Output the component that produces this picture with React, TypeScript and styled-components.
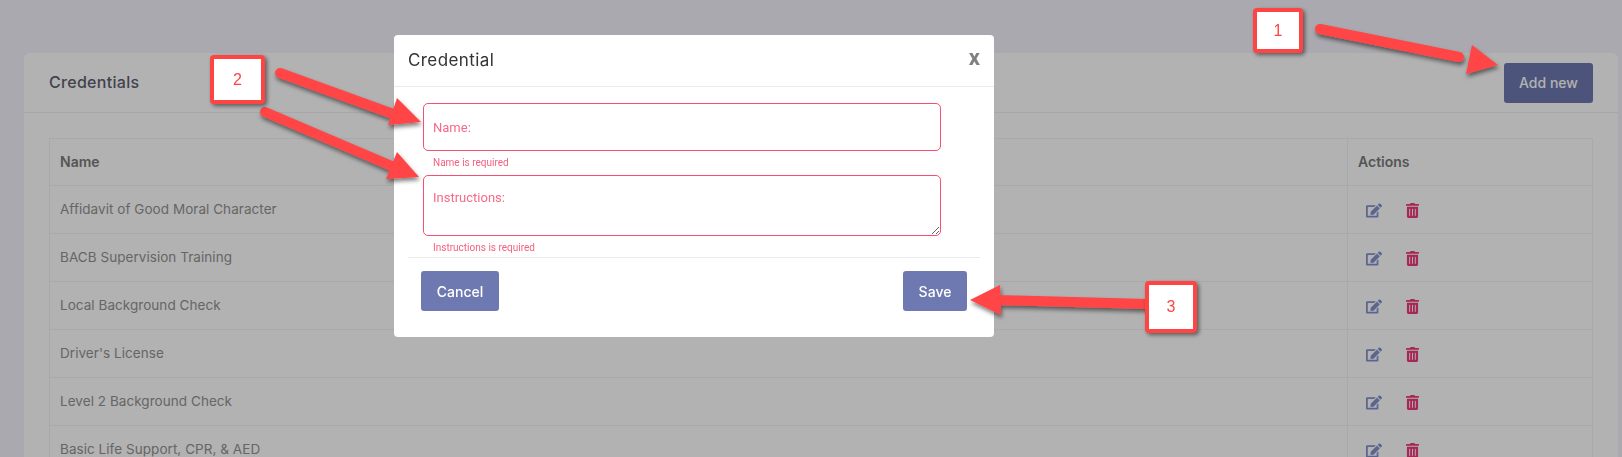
import styled, { createGlobalStyle } from 'styled-components';
import { FaEdit, FaTrashAlt } from 'react-icons/fa';

const GlobalStyle = createGlobalStyle`
  html, body {
    margin: 0;
    height: 100%;
    overflow: hidden;
    background: #f3f3fb;
  }
  * {
    box-sizing: border-box;
  }
`;

const Page = styled.div`
  height: 100vh;
  padding: 53px 4px 0 24px;
  overflow: hidden;
  font-family: Inter, 'Open Sans', sans-serif;
`;

const Card = styled.section`
  background: #fff;
  border-radius: 6px 6px 0 0;
`;

const CardHeader = styled.header`
  height: 60px;
  padding: 0 25px;
  display: flex;
  align-items: center;
  justify-content: space-between;
  border-bottom: 1px solid #eeeef6;
`;

const CardTitle = styled.h2`
  margin: 0 0 2px;
  font-size: 16px;
  font-weight: 500;
  letter-spacing: 0.3px;
  color: #5f5f70;
`;

const Button = styled.button<{ $dim?: boolean }>`
  height: 40px;
  padding: 0;
  width: ${({ $dim }) => ($dim ? '89px' : 'auto')};
  border: none;
  border-radius: 3px;
  background: #6d79b0;
  color: #fff;
  font-family: Inter, sans-serif;
  font-size: 14px;
  font-weight: 500;
`;

const CardBody = styled.div`
  padding: 25px 25px 0 25px;
`;

const Table = styled.table`
  width: 100%;
  border-collapse: collapse;
  table-layout: fixed;
`;

const Th = styled.th`
  height: 47px;
  padding: 0 10px 2px;
  text-align: left;
  font-size: 14px;
  font-weight: 600;
  color: #7a7a7a;
  border: 1px solid #f3f3f5;
`;

const ActionsTh = styled(Th)`
  width: 245px;
`;

const Td = styled.td`
  height: 48px;
  padding: 0 10px 2px;
  font-size: 13.5px;
  letter-spacing: 0.05px;
  color: #929292;
  border: 1px solid #f3f3f5;
`;

const Actions = styled.div`
  display: flex;
  align-items: center;
  gap: 24px;
  padding-left: 8px;
  padding-top: 3px;
`;

const EditIcon = styled(FaEdit)`
  width: 16px;
  height: 15px;
  color: #8491cc;
`;

const TrashIcon = styled(FaTrashAlt)`
  width: 13px;
  height: 15px;
  color: #ee3a7c;
`;

const Backdrop = styled.div`
  position: fixed;
  inset: 0;
  background: rgba(0, 0, 0, 0.3);
`;

const Dialog = styled.div`
  position: fixed;
  left: 394px;
  top: 35px;
  width: 600px;
  height: 302px;
  background: #fff;
  border-radius: 4px;
  font-family: Roboto, sans-serif;
`;

const DialogHeader = styled.div`
  height: 52px;
  padding: 0 14px 2px;
  display: flex;
  align-items: center;
  justify-content: space-between;
  border-bottom: 1px solid #e9e9ee;
`;

const DialogTitle = styled.h3`
  margin: 0;
  font-family: Inter, sans-serif;
  font-size: 17px;
  font-weight: 400;
  letter-spacing: 0.4px;
  color: #333;
`;

const Close = styled.span`
  margin-bottom: 4px;
  font-family: Roboto, sans-serif;
  font-size: 22px;
  font-weight: 700;
  line-height: 1;
  color: #808080;
`;

const DialogForm = styled.form`
  padding: 16px 0 0 29px;
  width: 547px;
`;

const FieldInput = styled.input`
  display: block;
  width: 100%;
  height: 48px;
  padding: 0 9px;
  border: 1px solid #f5506f;
  border-radius: 5px;
  outline: none;
  font-family: Roboto, sans-serif;
  font-size: 13px;

  &::placeholder {
    color: #f76a88;
    opacity: 1;
  }
`;

const FieldArea = styled.textarea`
  display: block;
  width: 100%;
  height: 61px;
  padding: 14px 9px 0;
  border: 1px solid #f5506f;
  border-radius: 5px;
  outline: none;
  font-family: Roboto, sans-serif;
  font-size: 13px;

  &::placeholder {
    color: #f76a88;
    opacity: 1;
  }
`;

const ErrorText = styled.div`
  height: 24px;
  padding: 5px 0 0 10px;
  font-size: 10px;
  line-height: 14px;
  color: #f5607f;
`;

const FormRule = styled.hr`
  margin: -3px 14px 0;
  border: none;
  border-top: 1px solid #e9e9ee;
`;

const DialogFooter = styled.div`
  padding: 13px 27px 0;
  display: flex;
  justify-content: space-between;
`;

const CancelButton = styled(Button)`
  width: 78px;
`;

const SaveButton = styled(Button)`
  width: 64px;
`;

const AnnotationLayer = styled.svg`
  position: fixed;
  inset: 0;
  width: 100%;
  height: 100%;
  pointer-events: none;
`;

const Callout = styled.div<{ $left: number; $top: number; $w: number; $h: number }>`
  position: fixed;
  left: ${({ $left }) => $left}px;
  top: ${({ $top }) => $top}px;
  width: ${({ $w }) => $w}px;
  height: ${({ $h }) => $h}px;
  display: flex;
  align-items: center;
  justify-content: center;
  background: #fff;
  border: 4px solid #ff4444;
  border-radius: 4px;
  box-shadow: 2px 2px 4px rgba(0, 0, 0, 0.5);
  font-family: 'Liberation Sans', sans-serif;
  font-size: 16px;
  color: #ff4444;
`;

const rows = [
  'Affidavit of Good Moral Character',
  'BACB Supervision Training',
  'Local Background Check',
  "Driver's License",
  'Level 2 Background Check',
  'Basic Life Support, CPR, & AED',
];

const arrows = [
  { tail: '1320,29 1459,57', head: '1498,65 1472,45 1466,74' },
  { tail: '280,73 396,115', head: '421,122 397,98 388,125' },
  { tail: '265,112 394,167', head: '419,177 397,152 386,179' },
  { tail: '1147,304 995,300', head: '970,300 1000,285 1001,315' },
];

export default function App() {
  return (
    <>
      <GlobalStyle />
      <Page>
        <Card>
          <CardHeader>
            <CardTitle>Credentials</CardTitle>
            <Button $dim>Add new</Button>
          </CardHeader>
          <CardBody>
            <Table>
              <thead>
                <tr>
                  <Th>Name</Th>
                  <ActionsTh>Actions</ActionsTh>
                </tr>
              </thead>
              <tbody>
                {rows.map((name) => (
                  <tr key={name}>
                    <Td>{name}</Td>
                    <Td>
                      <Actions>
                        <EditIcon />
                        <TrashIcon />
                      </Actions>
                    </Td>
                  </tr>
                ))}
              </tbody>
            </Table>
          </CardBody>
        </Card>
      </Page>

      <Backdrop />

      <Dialog>
        <DialogHeader>
          <DialogTitle>Credential</DialogTitle>
          <Close>x</Close>
        </DialogHeader>
        <DialogForm>
          <FieldInput placeholder="Name:" />
          <ErrorText>Name is required</ErrorText>
          <FieldArea placeholder="Instructions:" />
          <ErrorText>Instructions is required</ErrorText>
        </DialogForm>
        <FormRule />
        <DialogFooter>
          <CancelButton>Cancel</CancelButton>
          <SaveButton>Save</SaveButton>
        </DialogFooter>
      </Dialog>

      <AnnotationLayer viewBox="0 0 1622 457">
        <defs>
          <filter id="arrowShadow" x="-20%" y="-40%" width="140%" height="200%">
            <feDropShadow dx="1" dy="3" stdDeviation="2" floodColor="#000" floodOpacity="0.5" />
          </filter>
        </defs>
        {arrows.map((a) => (
          <g key={a.head} filter="url(#arrowShadow)">
            <polyline points={a.tail} fill="none" stroke="#ff4444" strokeWidth="10" strokeLinecap="round" />
            <polygon points={a.head} fill="#ff4444" />
          </g>
        ))}
      </AnnotationLayer>

      <Callout $left={1253} $top={8} $w={50} $h={45}>1</Callout>
      <Callout $left={210} $top={55} $w={55} $h={49}>2</Callout>
      <Callout $left={1145} $top={281} $w={52} $h={52}>3</Callout>
    </>
  );
}
